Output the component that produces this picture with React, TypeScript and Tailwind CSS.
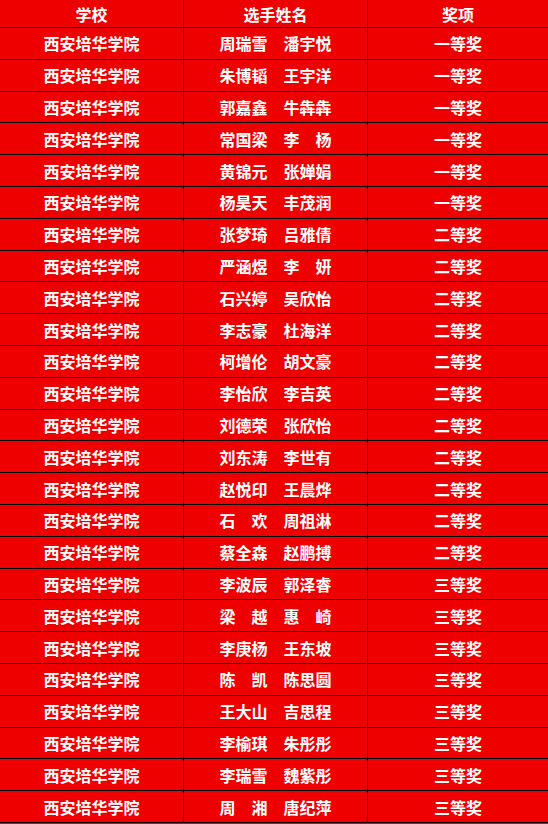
import React from "react";

const rows: [string, string][] = [
  ["周瑞雪　潘宇悦", "一等奖"],
  ["朱博韬　王宇洋", "一等奖"],
  ["郭嘉鑫　牛犇犇", "一等奖"],
  ["常国梁　李　杨", "一等奖"],
  ["黄锦元　张婵娟", "一等奖"],
  ["杨昊天　丰茂润", "一等奖"],
  ["张梦琦　吕雅倩", "二等奖"],
  ["严涵煜　李　妍", "二等奖"],
  ["石兴婷　吴欣怡", "二等奖"],
  ["李志豪　杜海洋", "二等奖"],
  ["柯增伦　胡文豪", "二等奖"],
  ["李怡欣　李吉英", "二等奖"],
  ["刘德荣　张欣怡", "二等奖"],
  ["刘东涛　李世有", "二等奖"],
  ["赵悦印　王晨烨", "二等奖"],
  ["石　欢　周祖淋", "二等奖"],
  ["蔡全森　赵鹏搏", "二等奖"],
  ["李波辰　郭泽睿", "三等奖"],
  ["梁　越　惠　崎", "三等奖"],
  ["李庚杨　王东坡", "三等奖"],
  ["陈　凯　陈思圆", "三等奖"],
  ["王大山　吉思程", "三等奖"],
  ["李榆琪　朱彤彤", "三等奖"],
  ["李瑞雪　魏紫彤", "三等奖"],
  ["周　湘　唐纪萍", "三等奖"],
];

export default function App() {
  return (
    <div
      className="w-[548px] h-[824px] overflow-hidden bg-[#ee0000] text-white font-bold text-[16px] leading-none"
      style={{ fontFamily: '"Noto Sans CJK SC", "Noto Sans", sans-serif' }}
    >
      <div className="flex h-[28px] border-b border-black">
        <div className="w-[184px] border-r border-black flex items-center justify-center">学校</div>
        <div className="w-[184px] border-r border-black flex items-center justify-center">选手姓名</div>
        <div className="flex-1 flex items-center justify-center">奖项</div>
      </div>
      {rows.map(([name, prize], i) => (
        <div key={i} className="flex h-[31.8px] border-b border-black">
          <div className="w-[184px] border-r border-black flex items-center justify-center">西安培华学院</div>
          <div className="w-[184px] border-r border-black flex items-center justify-center whitespace-pre">{name}</div>
          <div className="flex-1 flex items-center justify-center">{prize}</div>
        </div>
      ))}
    </div>
  );
}
